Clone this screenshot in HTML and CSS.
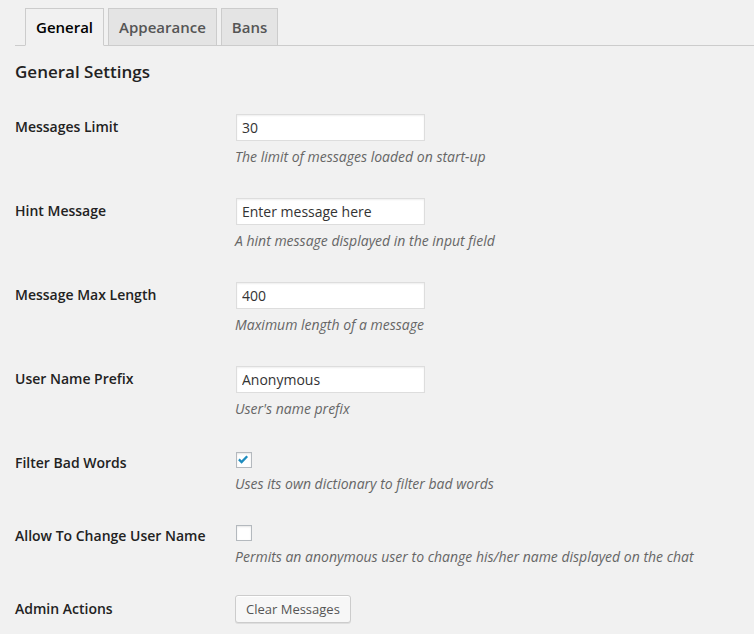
FILE: index.html
```html
<!DOCTYPE html>
<html>
<head>
<meta charset="utf-8">
<link rel="stylesheet" href="styles.css">
</head>
<body>
<div class="wrap">
  <div class="tabs">
    <a class="tab active">General</a>
    <a class="tab">Appearance</a>
    <a class="tab">Bans</a>
  </div>
  <h2 class="title">General Settings</h2>
  <div class="form">
    <div class="row">
      <div class="th">Messages Limit</div>
      <div class="td">
        <input class="text" type="text" value="30">
        <p class="desc">The limit of messages loaded on start-up</p>
      </div>
    </div>
    <div class="row">
      <div class="th">Hint Message</div>
      <div class="td">
        <input class="text" type="text" value="Enter message here">
        <p class="desc">A hint message displayed in the input field</p>
      </div>
    </div>
    <div class="row">
      <div class="th">Message Max Length</div>
      <div class="td">
        <input class="text" type="text" value="400">
        <p class="desc">Maximum length of a message</p>
      </div>
    </div>
    <div class="row">
      <div class="th">User Name Prefix</div>
      <div class="td">
        <input class="text" type="text" value="Anonymous">
        <p class="desc">User's name prefix</p>
      </div>
    </div>
    <div class="row">
      <div class="th">Filter Bad Words</div>
      <div class="td td-check">
        <div class="checkline"><span class="check"><svg viewBox="0 0 14 14" width="14" height="14"><path d="M1.9 6.4 L4.6 9 L10.2 3.2" fill="none" stroke="#1e8cbe" stroke-width="2.3" stroke-linejoin="miter"/></svg></span></div>
        <p class="desc">Uses its own dictionary to filter bad words</p>
      </div>
    </div>
    <div class="row">
      <div class="th">Allow To Change User Name</div>
      <div class="td td-check">
        <div class="checkline"><span class="check"></span></div>
        <p class="desc">Permits an anonymous user to change his/her name displayed on the chat</p>
      </div>
    </div>
    <div class="row">
      <div class="th">Admin Actions</div>
      <div class="td">
        <button class="button" type="button">Clear Messages</button>
      </div>
    </div>
  </div>
</div>
</body>
</html>
```

FILE: styles.css
```css
html, body {
  margin: 0;
  padding: 0;
  background: #f1f1f1;
}
body {
  font-family: "Open Sans", "Liberation Sans", sans-serif;
  color: #444;
  font-size: 14px;
}
.wrap {
  padding: 8px 0 0 15px;
}
.tabs {
  display: flex;
  align-items: flex-end;
  padding-left: 10px;
  border-bottom: 1px solid #ccc;
  height: 37px;
}
.tab {
  display: block;
  box-sizing: border-box;
  height: 38px;
  margin: 0 4px -1px 0;
  padding: 6px 10px;
  border: 1px solid #ccc;
  background: #e4e4e4;
  color: #555;
  font-size: 15px;
  font-weight: 600;
  line-height: 24px;
}
.tab.active {
  background: #f1f1f1;
  color: #000;
  border-bottom-color: #f1f1f1;
}
.title {
  margin: 14px 0 15px;
  font-size: 17px;
  line-height: 23px;
  font-weight: 600;
  color: #222;
}
.row {
  display: flex;
}
.th {
  width: 200px;
  padding: 20px 10px 20px 0;
  font-weight: 600;
  line-height: 18px;
  color: #222;
  flex: none;
}
.td {
  padding: 15px 10px;
}
.td-check {
  padding-bottom: 13px;
}
.text {
  display: block;
  box-sizing: border-box;
  width: 189px;
  height: 27px;
  margin: 1px;
  padding: 3px 5px;
  border: 1px solid #ddd;
  box-shadow: inset 0 1px 2px rgba(0,0,0,.07);
  background: #fff;
  color: #333;
  font-family: inherit;
  font-size: 14px;
  outline: none;
}
.desc {
  margin: 5px 0 0;
  font-size: 14px;
  line-height: 21px;
  font-style: italic;
  color: #666;
}
.checkline {
  box-sizing: border-box;
  height: 19px;
  padding: 3px 0 0 1px;
}
.check {
  display: block;
  box-sizing: border-box;
  width: 16px;
  height: 16px;
  border: 1px solid #b4b9be;
  background: #fff;
  box-shadow: inset 0 1px 2px rgba(0,0,0,.1);
}
.check svg {
  display: block;
}
.button {
  display: block;
  box-sizing: border-box;
  height: 28px;
  padding: 0 10px 1px;
  border: 1px solid #ccc;
  border-radius: 3px;
  background: #f7f7f7;
  box-shadow: inset 0 1px 0 #fff, 0 1px 0 rgba(0,0,0,.08);
  color: #555;
  font-family: inherit;
  font-size: 13px;
  line-height: 26px;
}
```
